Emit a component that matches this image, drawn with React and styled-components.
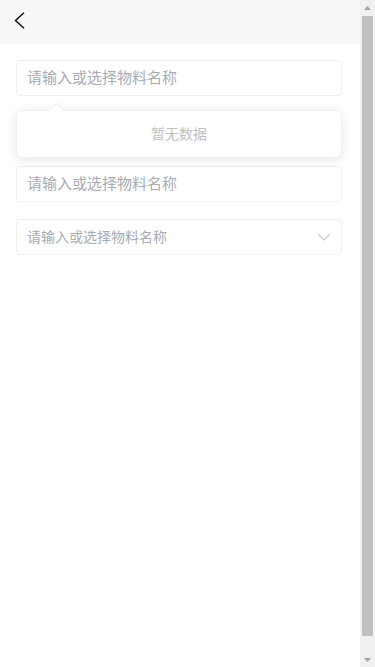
import React from "react";
import styled, { createGlobalStyle } from "styled-components";

const Global = createGlobalStyle`
  html, body { margin: 0; padding: 0; background: #fff; overflow: hidden; }
  body { font-family: "Noto Sans CJK SC", "Noto Sans", sans-serif; }
  * { box-sizing: border-box; }
`;

const Shell = styled.div`
  display: flex;
  height: 100vh;
`;

const Page = styled.div`
  flex: 1;
  min-width: 0;
  display: flex;
  flex-direction: column;
  background: #fff;
`;

const Header = styled.header`
  height: 44px;
  background: #f7f7f7;
  display: flex;
  align-items: center;
  padding: 0 0 4px 14px;
`;

const BackButton = styled.button`
  border: 0;
  background: none;
  padding: 0;
  display: flex;
  cursor: pointer;
`;

const Form = styled.div`
  display: flex;
  flex-direction: column;
  padding: 16px 18px 0 16px;
`;

const Field = styled.div`
  height: 36px;
  border: 1px solid #eeeeee;
  border-radius: 4px;
  display: flex;
  align-items: center;
  padding: 0 10px;
  margin-top: ${(p) => p.$mt || 0}px;
`;

const Input = styled.input`
  flex: 1;
  border: 0;
  outline: none;
  background: transparent;
  font-family: inherit;
  font-size: ${(p) => p.$size}px;
  padding: 0 0 3px;
  min-width: 0;
  &::placeholder { color: #a8abb2; }
`;

const Dropdown = styled.div`
  position: relative;
  margin: 14px 0 8px;
  height: 48px;
  border-radius: 6px;
  border: 1px solid #f0f0f0;
  background: #fff;
  box-shadow: 0 2px 12px rgba(0, 0, 0, 0.1);
  display: flex;
  align-items: center;
  justify-content: center;
  padding-bottom: 2px;
  font-size: 14px;
  color: #c0c0c0;
  &::before {
    content: "";
    position: absolute;
    top: -6px;
    left: 34px;
    width: 10px;
    height: 10px;
    background: #fff;
    border-left: 1px solid #f0f0f0;
    border-top: 1px solid #f0f0f0;
    transform: rotate(45deg);
  }
`;

const ScrollBar = styled.div`
  width: 15px;
  flex: none;
  background: #f1f1f1;
  display: flex;
  flex-direction: column;
`;

const ScrollArrow = styled.div`
  height: 15px;
  display: flex;
  align-items: center;
  justify-content: center;
`;

const ScrollTrack = styled.div`
  flex: 1;
  display: flex;
  flex-direction: column;
  padding: 1px 2px 16px;
`;

const ScrollThumb = styled.div`
  flex: 1;
  background: #c1c1c1;
`;

const Chevron = () => (
  <svg width="14" height="8" viewBox="0 0 14 8" fill="none">
    <path d="M1 1l6 6 6-6" stroke="#c8c9cc" strokeWidth="1.2" />
  </svg>
);

const Tri = ({ down }) => (
  <svg width="7" height="4" viewBox="0 0 7 4">
    <path d={down ? "M0 0h7L3.5 4z" : "M0 4h7L3.5 0z"} fill="#a3a3a3" />
  </svg>
);

export default function App() {
  return (
    <Shell>
      <Global />
      <Page>
        <Header>
          <BackButton aria-label="back">
            <svg width="11" height="17" viewBox="0 0 11 17" fill="none">
              <path d="M10 0.7L1.5 8.5L10 16.3" stroke="#111" strokeWidth="1.5" />
            </svg>
          </BackButton>
        </Header>
        <Form>
          <Field>
            <Input $size={15} placeholder="请输入或选择物料名称" />
          </Field>
          <Dropdown>暂无数据</Dropdown>
          <Field>
            <Input $size={15} placeholder="请输入或选择物料名称" />
          </Field>
          <Field $mt={17}>
            <Input $size={14} placeholder="请输入或选择物料名称" />
            <Chevron />
          </Field>
        </Form>
      </Page>
      <ScrollBar aria-hidden="true">
        <ScrollArrow><Tri /></ScrollArrow>
        <ScrollTrack><ScrollThumb /></ScrollTrack>
        <ScrollArrow><Tri down /></ScrollArrow>
      </ScrollBar>
    </Shell>
  );
}
